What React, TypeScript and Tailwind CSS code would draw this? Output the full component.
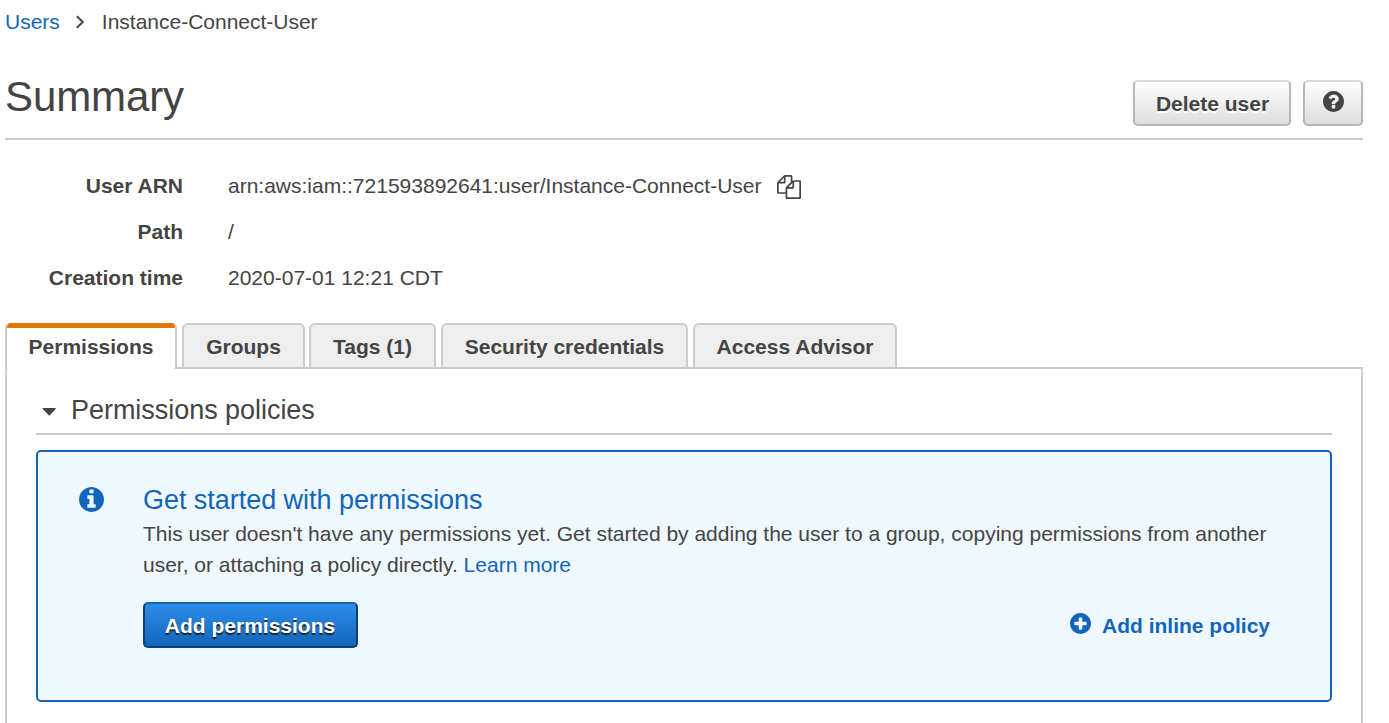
import React from "react";

const DISC =
  "q0 209-103 385.5t-279.5 279.5-385.5 103-385.5-103-279.5-279.5-103-385.5 103-385.5 279.5-279.5 385.5-103 385.5 103 279.5 279.5 103 385.5z";

const INFO =
  "M1152 1376v-160q0-14-9-23t-23-9h-96v-512q0-14-9-23t-23-9h-320q-14 0-23 9t-9 23v160q0 14 9 23t23 9h96v320h-96q-14 0-23 9t-9 23v160q0 14 9 23t23 9h448q14 0 23-9t9-23zm-128-896v-160q0-14-9-23t-23-9h-192q-14 0-23 9t-9 23v160q0 14 9 23t23 9h192q14 0 23-9t9-23zm640 416" +
  DISC;

const QUESTION =
  "M1024 1376v-192q0-14-9-23t-23-9h-192q-14 0-23 9t-9 23v192q0 14 9 23t23 9h192q14 0 23-9t9-23zm256-672q0-88-55.5-163t-138.5-116-170-41q-243 0-371 213-15 24 8 42l132 100q7 6 19 6 16 0 25-12 53-68 86-92 34-24 86-24 48 0 85.5 26t37.5 59q0 38-20 61t-68 45q-63 28-115.5 86.5t-52.5 125.5v36q0 14 9 23t23 9h192q14 0 23-9t9-23q0-19 21.5-49.5t54.5-49.5q32-18 49-28.5t46-35 44.5-48 28-60.5 12.5-81zm384 192" +
  DISC;

const PLUS =
  "M1344 960v-128q0-26-19-45t-45-19h-256v-256q0-26-19-45t-45-19h-128q-26 0-45 19t-19 45v256h-256q-26 0-45 19t-19 45v128q0 26 19 45t45 19h256v256q0 26 19 45t45 19h128q26 0 45-19t19-45v-256h256q26 0 45-19t19-45zm320-64" +
  DISC;

const FILES =
  "M1696 384q40 0 68 28t28 68v1216q0 40-28 68t-68 28h-960q-40 0-68-28t-28-68v-288h-544q-40 0-68-28t-28-68v-672q0-40 20-88t48-76l408-408q28-28 76-48t88-20h416q40 0 68 28t28 68v328q68-40 128-40h416zm-544 213l-299 299h299v-299zm-640-384l-299 299h299v-299zm196 647l316-316v-416h-384v416q0 40-28 68t-68 28h-416v640h512v-256q0-40 20-88t48-76zm956 804v-1152h-384v416q0 40-28 68t-68 28h-416v640h896z";

function Icon({ path, viewBox = "128 128 1536 1536", className }: { path: string; viewBox?: string; className: string }) {
  return (
    <svg viewBox={viewBox} fill="currentColor" className={className} aria-hidden="true">
      <path d={path} />
    </svg>
  );
}

const details = [
  { label: "User ARN", value: "arn:aws:iam::721593892641:user/Instance-Connect-User", copy: true },
  { label: "Path", value: "/", copy: false },
  { label: "Creation time", value: "2020-07-01 12:21 CDT", copy: false },
];

const tabs = [
  { label: "Groups", width: "w-[123px]" },
  { label: "Tags (1)", width: "-ml-px w-[127px]" },
  { label: "Security credentials", width: "w-[247px]" },
  { label: "Access Advisor", width: "w-[204px]" },
];

const greyButton =
  "flex h-[46px] items-center justify-center rounded-[5px] border-2 border-[#b7b7b7] border-t-[#d9d9d9] bg-linear-to-b from-white to-[#dddddd] font-bold";

export default function App() {
  return (
    <div className="h-[723px] overflow-hidden bg-white pl-[5px] pr-[26px] font-['Liberation_Sans',Arial,sans-serif] text-[21px] leading-[31px] text-[#444444]">
      <nav className="flex h-[44px] items-center pb-[2px]">
        <a className="text-[#1166bb]">Users</a>
        <svg viewBox="0 0 10 14" className="ml-[15px] mt-px h-[14px] w-[10px]" fill="none" stroke="currentColor" strokeWidth="2">
          <path d="M1.8 1.2 7.8 7 1.8 12.8" />
        </svg>
        <span className="ml-[17px] tracking-[-0.01px]">Instance-Connect-User</span>
      </nav>

      <header className="flex h-[96px] items-start border-b-2 border-[#cccccc]">
        <h1 className="mt-[29px] flex-1 text-[42px] leading-[48px] tracking-[-0.1px]">Summary</h1>
        <button className={`${greyButton} mt-[36px] w-[158px] pl-px [text-shadow:0_2px_1px_#fff]`}>Delete user</button>
        <button className={`${greyButton} ml-[12px] mt-[36px] w-[60px]`}>
          <Icon path={QUESTION} className="mb-[3px] size-[21px]" />
        </button>
      </header>

      <dl className="mt-[22px]">
        {details.map((d) => (
          <div key={d.label} className="flex h-[46px] items-center">
            <dt className="w-[178px] text-right font-bold">{d.label}</dt>
            <dd className="ml-[45px] flex items-center">
              {d.value}
              {d.copy && <Icon path={FILES} viewBox="0 0 1792 1792" className="ml-[15.5px] mt-[4px] size-[24px]" />}
            </dd>
          </div>
        ))}
      </dl>

      <div className="relative z-10 mt-[23px] flex gap-[5px] font-bold">
        <div className="flex h-[46px] w-[172px] flex-col overflow-hidden rounded-t-[5px] rounded-b-[3px] border-x-2 border-[#cccccc] bg-white">
          <div className="-mx-px h-[5px] shrink-0 bg-[#e17700]" />
          <div className="pt-[3px] text-center">Permissions</div>
        </div>
        {tabs.map((t) => (
          <div
            key={t.label}
            className={`${t.width} h-[44px] rounded-t-[6px] border-2 border-b-0 border-[#cccccc] bg-[#eeeeee] pt-[6px] text-center`}
          >
            {t.label}
          </div>
        ))}
      </div>

      <main className="-mt-[2px] h-[400px] border-2 border-[#cccccc] px-[29px] pt-[24px]">
        <div className="flex h-[42px] items-start border-b-2 border-[#cccccc]">
          <svg viewBox="0 0 14 8" className="ml-[6px] mt-[15px] h-[8px] w-[14px]" fill="currentColor">
            <path d="M1 0h12.4q.8.4.2 1L7.9 7.3q-.6.6-1.2 0L.8 1Q.2.4 1 0z" />
          </svg>
          <h2 className="ml-[15px] text-[27px] leading-[34px] tracking-[-0.04px]">Permissions policies</h2>
        </div>

        <section className="mt-[15px] flex h-[252px] rounded-[5px] border-2 border-[#1166bb] bg-[#f0f8ff] pl-[41px] pr-[60px]">
          <Icon path={INFO} className="mt-[35px] size-[25px] shrink-0 text-[#1166bb]" />
          <div className="ml-[39px] flex-1 pt-[30px]">
            <h3 className="text-[27px] leading-[36px] tracking-[-0.04px] text-[#1166bb]">Get started with permissions</h3>
            <p className="whitespace-nowrap">
              This user doesn't have any permissions yet. Get started by adding the user to a group, copying permissions from another
              <br />
              user, or attaching a policy directly. <a className="text-[#1166bb]">Learn more</a>
            </p>
            <div className="mt-[22px] flex items-center justify-between font-bold">
              <button className="h-[46px] w-[215px] rounded-[5px] border-2 border-[#0c3f73] border-t-[#1166bb] bg-linear-to-b from-[#2d8cea] to-[#1166bb] pr-px text-white [text-shadow:0_2px_1px_#222]">
                Add permissions
              </button>
              <a className="flex items-center text-[#1166bb]">
                <Icon path={PLUS} className="mb-[3px] mr-[11px] size-[21px]" />
                Add inline policy
              </a>
            </div>
          </div>
        </section>
      </main>
    </div>
  );
}
